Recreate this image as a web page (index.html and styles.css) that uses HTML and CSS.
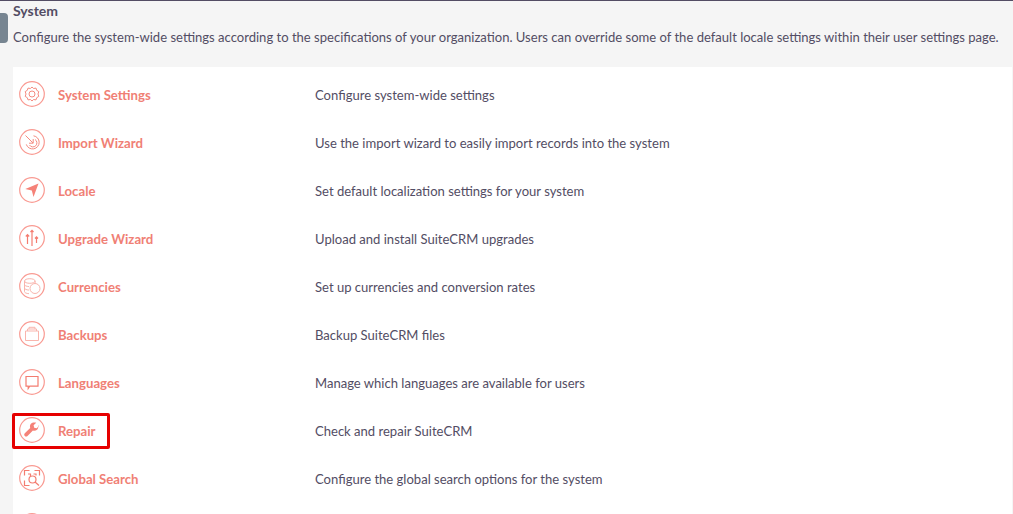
FILE: index.html
```html
<!DOCTYPE html>
<html lang="en">
<head>
    <meta charset="UTF-8">
    <title>System</title>
    <link rel="stylesheet" href="styles.css">
</head>
<body>
    <div class="side-tab"></div>
    <div class="container">
        <h2>System</h2>
        <p class="intro">Configure the system-wide settings according to the specifications of your organization. Users can override some of the default locale settings within their user settings page.</p>

        <div class="panel">
            <div class="row">
                <svg class="icon" viewBox="0 0 26 26"><circle class="ring" cx="13" cy="13" r="12.3"/><path class="line gear" d="M13 6l1.600 1.500 2.400-.4.700 2.200 2.100 1.300-.8 2.400.8 2.400-2.100 1.300-.7 2.200-2.400-.4L13 20l-1.600-1.500-2.400.4-.7-2.200-2.100-1.300.8-2.400-.8-2.400 2.100-1.300.7-2.200 2.400.4z"/><circle class="line" cx="13" cy="13" r="3"/></svg>
                <a class="name">System Settings</a>
                <span class="desc">Configure system-wide settings</span>
            </div>
            <div class="row">
                <svg class="icon" viewBox="0 0 26 26"><circle class="ring" cx="13" cy="13" r="12.3"/><path class="line" d="M14.500 6.800a6.600 6.600 0 1 1-7.200 8.600M16 10.500a4 4 0 1 1-5.500 5.500"/><path class="line" d="M6.500 6.500l7.500 7.500M14.200 10v4.200H10"/></svg>
                <a class="name">Import Wizard</a>
                <span class="desc">Use the import wizard to easily import records into the system</span>
            </div>
            <div class="row">
                <svg class="icon" viewBox="0 0 26 26"><circle class="ring" cx="13" cy="13" r="12.3"/><path class="solid" d="M19.500 6.500L14.500 20l-1.700-6.500L6.300 12z"/></svg>
                <a class="name">Locale</a>
                <span class="desc">Set default localization settings for your system</span>
            </div>
            <div class="row">
                <svg class="icon" viewBox="0 0 26 26"><circle class="ring" cx="13" cy="13" r="12.300"/><path class="line strong" d="M8.500 19v-9M6.800 11.500l1.700-1.800 1.700 1.800M13 21V5.500M11.500 7L13 5.300 14.500 7M17.500 18v-6M16 13.500l1.500-1.700 1.500 1.700"/></svg>
                <a class="name">Upgrade Wizard</a>
                <span class="desc">Upload and install SuiteCRM upgrades</span>
            </div>
            <div class="row">
                <svg class="icon" viewBox="0 0 26 26"><circle class="ring" cx="13" cy="13" r="12.300"/><path class="line faint" d="M5.500 8c0-1.400 2.500-2.300 5.300-2.300s5.300.9 5.300 2.300-2.500 2.300-5.300 2.300S5.500 9.400 5.500 8zM5.500 8v10.500c0 1.200 1.800 2 4.500 2.200M5.500 11.500c0 1.100 1.800 1.900 4.500 2.100M5.500 15c0 1.100 1.800 1.900 4.500 2.100M16.100 8v3"/><circle class="line faint" cx="16" cy="15.500" r="5"/></svg>
                <a class="name">Currencies</a>
                <span class="desc">Set up currencies and conversion rates</span>
            </div>
            <div class="row">
                <svg class="icon" viewBox="0 0 26 26"><circle class="ring" cx="13" cy="13" r="12.300"/><path class="line faint" d="M6.500 10h13v9.500h-13zM8.500 10V8h9v2M10 8V6.300h6V8"/></svg>
                <a class="name">Backups</a>
                <span class="desc">Backup SuiteCRM files</span>
            </div>
            <div class="row">
                <svg class="icon" viewBox="0 0 26 26"><circle class="ring" cx="13" cy="13" r="12.300"/><path class="line strong" d="M7 7.500h12v9.700h-8.300L9.200 19.500v-2.300H7z"/></svg>
                <a class="name">Languages</a>
                <span class="desc">Manage which languages are available for users</span>
            </div>
            <div class="row">
                <div class="highlight"></div>
                <svg class="icon" viewBox="0 0 26 26"><circle class="ring" cx="13" cy="13" r="12.300"/><path class="solid" d="M20.300 8.800l-2.700 2.500-2.400-.6-.6-2.400 2.600-2.600c-2-.6-4.200-.2-5.300 1.100-1 1.200-1.200 2.800-.7 4.100l-5.400 5.400c-.8.800-.8 2 0 2.700.8.800 1.900.8 2.700 0l5.400-5.400c1.400.5 3 .2 4.200-.9 1.200-1.100 1.500-2.700.9-3.900z"/></svg>
                <a class="name">Repair</a>
                <span class="desc">Check and repair SuiteCRM</span>
            </div>
            <div class="row">
                <svg class="icon" viewBox="0 0 26 26"><circle class="ring" cx="13" cy="13" r="12.300"/><path class="line strong" d="M10.500 5.500h-5v5M15.500 5.500h5v5M5.500 15.500v5h5M9 9h2.500v2M14.500 9H17v1.500"/><circle class="line strong" cx="13.500" cy="14.500" r="3.500"/><path class="line strong" d="M16 17l4 3.500"/></svg>
                <a class="name">Global Search</a>
                <span class="desc">Configure the global search options for the system</span>
            </div>
            <div class="row">
                <svg class="icon" viewBox="0 0 26 26"><circle class="ring" cx="13" cy="13" r="12.300"/></svg>
            </div>
        </div>
    </div>
</body>
</html>
```
FILE: styles.css
```css
html, body {
    height: 514px;
    overflow: hidden;
}

body {
    font-family: 'Lato', sans-serif;
    font-size: 13.06px;
    background-color: #f5f5f5;
    color: #534d64;
    margin: 0;
    padding: 0;
    border-top: 1px solid #534d64;
    box-sizing: border-box;
}

.side-tab {
    position: absolute;
    left: 0;
    top: 13px;
    width: 8px;
    height: 30px;
    background-color: #778591;
    border-radius: 0 4px 4px 0;
}

.container {
    padding-left: 13px;
    padding-right: 1px;
}

h2 {
    font-size: 14px;
    font-weight: bold;
    line-height: 20px;
    margin: 0;
}

.intro {
    line-height: 20px;
    margin: 6px 0 0;
    white-space: nowrap;
}

.panel {
    background-color: white;
    margin-top: 20px;
    padding-top: 3px;
}

.row {
    position: relative;
    display: flex;
    align-items: center;
    height: 48px;
    padding-left: 6px;
}

.icon {
    width: 26px;
    height: 26px;
    flex-shrink: 0;
}

.ring {
    fill: none;
    stroke: #f99a92;
    stroke-width: 1.2;
}

.line {
    fill: none;
    stroke: #f58b80;
    stroke-width: 1;
}

.gear {
    stroke-linejoin: round;
}

.strong {
    stroke: #f47c70;
    stroke-width: 1.2;
}

.faint {
    stroke: #f9b5ad;
}

.solid {
    fill: #f58278;
}

.name {
    width: 257px;
    margin-left: 13px;
    padding-top: 2px;
    font-size: 13.2px;
    font-weight: bold;
    color: #f08075;
    flex-shrink: 0;
}

.desc {
    padding-top: 2px;
    white-space: nowrap;
}

.highlight {
    position: absolute;
    left: -1px;
    top: 7px;
    width: 98px;
    height: 36px;
    border: 3px solid #e60000;
    border-radius: 2px;
    box-sizing: border-box;
}
```
